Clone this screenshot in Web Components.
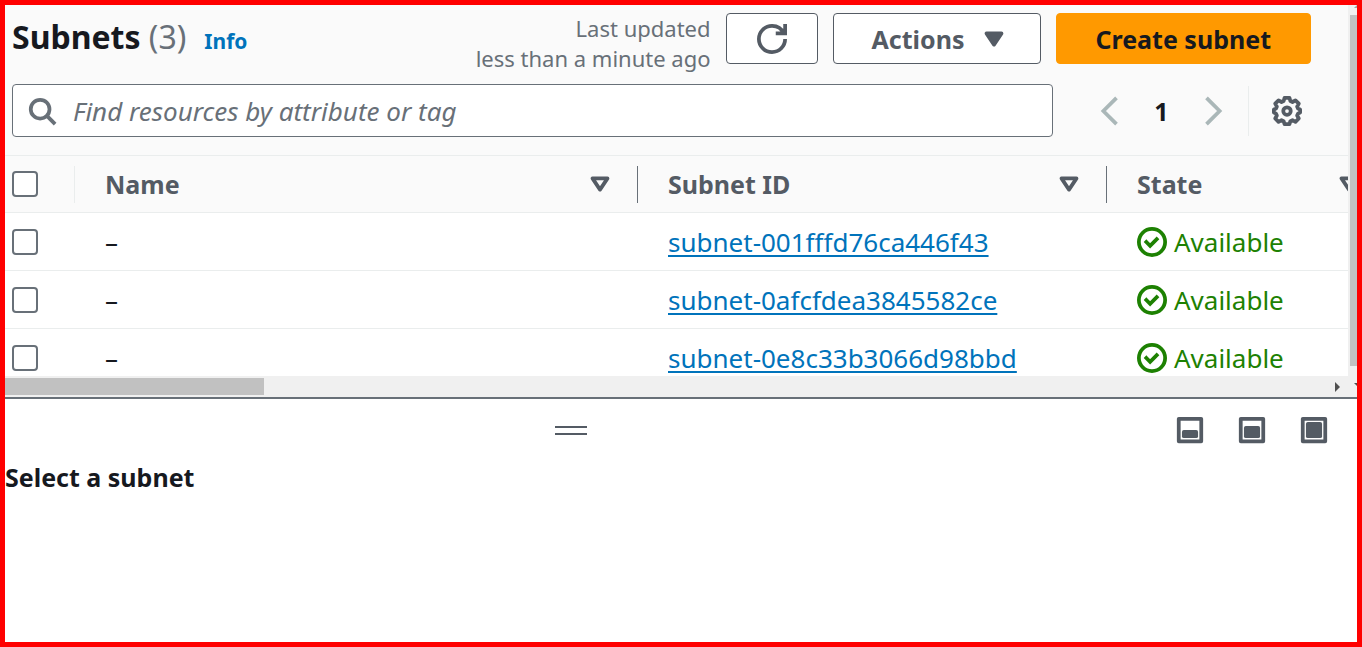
<!DOCTYPE html>
<html lang="en">
<head>
<meta charset="utf-8">
<meta name="viewport" content="width=device-width, initial-scale=1">
<title>Subnets</title>
<style>
  :root {
    --text: #16191f;
    --secondary: #545b64;
    --muted: #687078;
    --link: #0073bb;
    --line: #eaeded;
    --surface: #fafafa;
    --success: #1d8102;
  }

  * {
    box-sizing: border-box;
  }

  body {
    margin: 0;
    height: 100vh;
    border: 5px solid #f00;
    color: var(--text);
    background: #fff;
    font: 26px/30px "Noto Sans", "Open Sans", sans-serif;
  }
</style>
</head>
<body>
<subnets-page>
  <list-toolbar slot="list"></list-toolbar>
  <subnet-table slot="list"></subnet-table>
  <split-panel slot="panel">Select a subnet</split-panel>
</subnets-page>

<script>
/**
 *  An icon on a 16 unit grid
 *  @attribute name: one of the keys of AppIcon.shapes
 */
class AppIcon extends HTMLElement {
  static observedAttributes = ['name'];

  static shapes = {
    search: '<circle cx="7" cy="7" r="5"/><path d="m15 15-4.5-4.5"/>',
    refresh: '<path d="M10 5h5V0M15 8a7 7 0 0 1-7 7 7 7 0 0 1-7-7 7 7 0 0 1 7-7 6.9 6.9 0 0 1 6.3 4"/>',
    caret: '<path d="M4 5h8l-4 6-4-6z" fill="currentColor" stroke-linejoin="round"/>',
    sort: '<path d="M4 5h8l-4 6-4-6z" stroke-linejoin="round"/>',
    prev: '<path d="m12 1-7 7 7 7"/>',
    next: '<path d="m4 1 7 7-7 7"/>',
    check: '<circle cx="8" cy="8" r="7"/><path d="m5 8 2 2 3.5-3.5" stroke-linecap="square"/>',
    settings: '<circle cx="8" cy="8" r="2"/><path d="M6.7 1h2.6l.5 1.7 1.1.5 1.6-.9 1.8 1.8-.9 1.6.5 1 1.1.5v1.6l-1.1.5-.5 1.1.9 1.6-1.8 1.8-1.6-.9-1.1.5-.5 1.6H6.7l-.5-1.6-1.1-.5-1.6.9-1.8-1.8.9-1.6-.5-1.1L1 8.8V7.2l1.1-.5.5-1-.9-1.6 1.8-1.8 1.6.9 1.1-.5z" stroke-linejoin="round"/>',
    'panel-low': '<path d="M2 2h12v12H2z" stroke-linejoin="round"/><rect x="3.7" y="8" width="8.6" height="4.3" rx="1" fill="currentColor" stroke="none"/>',
    'panel-mid': '<path d="M2 2h12v12H2z" stroke-linejoin="round"/><rect x="3.7" y="5.8" width="8.6" height="6.5" rx="1" fill="currentColor" stroke="none"/>',
    'panel-full': '<path d="M2 2h12v12H2z" stroke-linejoin="round"/><rect x="3.7" y="3.7" width="8.6" height="8.6" rx="1" fill="currentColor" stroke="none"/>'
  };

  constructor() {
    super();
    this.attachShadow({mode: 'open'});
  }

  connectedCallback() { this.render(); }

  attributeChangedCallback() { this.render(); }

  render() {
    this.shadowRoot.innerHTML = `
    <style>
      :host { display: block; flex: none; width: 30px; height: 30px; }
      svg { display: block; width: 100%; height: 100%; }
    </style>
    <svg viewBox="0 0 16 16" fill="none" stroke="currentColor" stroke-width="2" aria-hidden="true">
      ${AppIcon.shapes[this.getAttribute('name')] || ''}
    </svg>`;
  }
}

/**
 *  A push button
 *  @attribute variant [optional]: "primary" for the filled one, "menu" for one with a caret
 *  @attribute label [optional]: accessible name for icon buttons
 */
class AppButton extends HTMLElement {
  constructor() {
    super();
    this.attachShadow({mode: 'open'});
  }

  connectedCallback() {
    const label = this.getAttribute('label');
    this.shadowRoot.innerHTML = `
    <style>
      :host { display: block; flex: none; }
      button {
        box-sizing: border-box;
        display: flex;
        align-items: center;
        justify-content: center;
        gap: 15px;
        height: 51px;
        padding: 0 30px;
        border: 1px solid var(--secondary);
        border-radius: 4px;
        color: var(--secondary);
        background: #fff;
        font: 700 25px/30px "Noto Sans", "Open Sans", sans-serif;
        white-space: nowrap;
        cursor: pointer;
      }
      :host([variant=menu]) button { padding: 0 31px 0 38px; }
      :host([variant=primary]) button {
        padding: 0 39px 0 38px;
        border-color: #f90;
        color: var(--text);
        background: #f90;
      }
    </style>
    <button type="button" ${label ? `aria-label="${label}"` : ''}><slot></slot></button>`;
  }
}

/** Title, actions, search box and paging above the table */
class ListToolbar extends HTMLElement {
  constructor() {
    super();
    this.attachShadow({mode: 'open'});
    this.shadowRoot.innerHTML = `
    <style>
      :host {
        display: flex;
        flex-direction: column;
        gap: 11px;
        padding: 8px 37px 18px 7px;
        background: var(--surface);
      }
      .row { display: flex; }
      .title { display: flex; align-items: baseline; flex: 1; }
      h1 { margin: 0; font-size: 32px; line-height: 48px; }
      h1 span { color: var(--muted); font-weight: 400; }
      .title a {
        margin-left: 18px;
        color: var(--link);
        font-size: 21px;
        font-weight: 700;
        text-decoration: none;
      }
      .updated {
        margin: 0 15px;
        color: var(--muted);
        font-size: 22px;
        line-height: 30px;
        text-align: right;
      }
      .actions { display: flex; align-items: flex-start; gap: 15px; }
      .search {
        box-sizing: border-box;
        display: flex;
        align-items: center;
        flex: 1;
        gap: 16px;
        height: 53px;
        padding: 0 14px;
        border: 1px solid var(--muted);
        border-radius: 4px;
        color: var(--muted);
        background: #fff;
      }
      input {
        flex: 1;
        min-width: 0;
        height: 40px;
        padding: 0;
        border: 0;
        outline: 0;
        color: var(--text);
        background: none;
        font: inherit;
        line-height: 40px;
      }
      input::placeholder { color: var(--muted); font-style: italic; opacity: 1; }
      nav { display: flex; align-items: center; padding: 0 9px 0 41px; }
      nav button {
        padding: 0;
        border: 0;
        color: var(--secondary);
        background: none;
        font: inherit;
        cursor: pointer;
      }
      nav button:disabled { color: #aab7b8; }
      nav .page { width: 75px; color: var(--text); font-size: 25px; font-weight: 700; }
      .settings {
        display: flex;
        align-items: center;
        height: 50px;
        margin-left: 19px;
        padding-left: 23px;
        border-left: 1px solid var(--line);
      }
    </style>
    <div class="row">
      <div class="title">
        <h1>Subnets <span>(3)</span></h1>
        <a href="#info">Info</a>
      </div>
      <p class="updated">Last updated<br>less than a minute ago</p>
      <div class="actions">
        <app-button label="Refresh"><app-icon name="refresh"></app-icon></app-button>
        <app-button variant="menu">Actions<app-icon name="caret"></app-icon></app-button>
        <app-button variant="primary">Create subnet</app-button>
      </div>
    </div>
    <div class="row">
      <label class="search">
        <app-icon name="search"></app-icon>
        <input type="text" aria-label="Find resources" placeholder="Find resources by attribute or tag">
      </label>
      <nav aria-label="Pages">
        <button type="button" aria-label="Previous page" disabled><app-icon name="prev"></app-icon></button>
        <button type="button" class="page">1</button>
        <button type="button" aria-label="Next page" disabled><app-icon name="next"></app-icon></button>
        <div class="settings">
          <button type="button" aria-label="Preferences"><app-icon name="settings"></app-icon></button>
        </div>
      </nav>
    </div>`;
  }
}

/** The table of subnets */
class SubnetTable extends HTMLElement {
  #rows = [
    {name: '–', id: 'subnet-001fffd76ca446f43', state: 'Available'},
    {name: '–', id: 'subnet-0afcfdea3845582ce', state: 'Available'},
    {name: '–', id: 'subnet-0e8c33b3066d98bbd', state: 'Available'}
  ];

  constructor() {
    super();
    this.attachShadow({mode: 'open'});
    this.shadowRoot.innerHTML = `
    <style>
      :host { display: block; overflow: hidden; }
      table { width: 1382px; border-collapse: separate; border-spacing: 0; table-layout: fixed; }
      .select { width: 70px; }
      .name { width: 563px; }
      .id { width: 469px; }
      th, td {
        box-sizing: border-box;
        height: 58px;
        padding: 0;
        border-bottom: 1px solid var(--line);
        text-align: left;
        white-space: nowrap;
      }
      th {
        border-top: 1px solid var(--line);
        color: var(--secondary);
        background: var(--surface);
        font-size: 25px;
      }
      th div {
        box-sizing: border-box;
        display: flex;
        align-items: center;
        justify-content: space-between;
        height: 37px;
        padding: 0 22px 0 30px;
        border-right: 1px solid var(--muted);
      }
      th:first-child div { padding: 0 0 0 7px; border-color: var(--line); }
      td { padding-left: 30px; }
      td:first-child { padding-left: 7px; }
      input {
        appearance: none;
        box-sizing: border-box;
        display: block;
        width: 26px;
        height: 26px;
        margin: 0;
        border: 2px solid var(--muted);
        border-radius: 4px;
        background: #fff;
      }
      input:checked { background: var(--link); }
      a { color: var(--link); text-decoration-thickness: 2px; text-underline-offset: 3px; }
      .state { display: flex; align-items: center; gap: 7px; color: var(--success); }
    </style>
    <table>
      <colgroup><col class="select"><col class="name"><col class="id"><col></colgroup>
      <thead>
        <tr>
          <th><div><input type="checkbox" aria-label="Select all"></div></th>
          <th><div>Name<app-icon name="sort"></app-icon></div></th>
          <th><div>Subnet ID<app-icon name="sort"></app-icon></div></th>
          <th><div>State<app-icon name="sort"></app-icon></div></th>
        </tr>
      </thead>
      <tbody>
        ${this.#rows.map(row => `
        <tr>
          <td><input type="checkbox" aria-label="Select ${row.id}"></td>
          <td>${row.name}</td>
          <td><a href="#${row.id}">${row.id}</a></td>
          <td><span class="state"><app-icon name="check"></app-icon>${row.state}</span></td>
        </tr>`).join('')}
      </tbody>
    </table>`;
  }
}

/** The panel under the list, with its drag handle and size buttons */
class SplitPanel extends HTMLElement {
  constructor() {
    super();
    this.attachShadow({mode: 'open'});
    this.shadowRoot.innerHTML = `
    <style>
      :host { display: block; border-top: 2px solid var(--muted); background: #fff; }
      header {
        display: grid;
        grid-template-columns: 1fr auto 1fr;
        align-items: center;
        height: 62px;
        padding-right: 28px;
      }
      .handle {
        box-sizing: border-box;
        grid-column: 2;
        width: 32px;
        height: 9px;
        margin-right: 192px;
        padding: 0;
        border: solid var(--secondary);
        border-width: 2px 0;
        background: none;
        cursor: row-resize;
      }
      .sizes { display: flex; justify-content: flex-end; gap: 32px; }
      .sizes button { padding: 0; border: 0; color: var(--secondary); background: none; }
      h2 { margin: 0; font-size: 25px; line-height: 32px; }
    </style>
    <header>
      <button type="button" class="handle" aria-label="Resize panel"></button>
      <div class="sizes">
        <button type="button" aria-label="Small"><app-icon name="panel-low"></app-icon></button>
        <button type="button" aria-label="Medium"><app-icon name="panel-mid"></app-icon></button>
        <button type="button" aria-label="Full"><app-icon name="panel-full"></app-icon></button>
      </div>
    </header>
    <h2><slot></slot></h2>`;
  }
}

/** Splits the page in a list with its scroll bars and a panel below */
class SubnetsPage extends HTMLElement {
  constructor() {
    super();
    this.attachShadow({mode: 'open'});
    this.shadowRoot.innerHTML = `
    <style>
      :host {
        display: grid;
        grid-template: minmax(0, 1fr) 21px 245px / minmax(0, 1fr) 9px;
        height: 100%;
        overflow: hidden;
      }
      .list { overflow: hidden; }
      .bar { display: flex; overflow: hidden; background: #f0f0f0; }
      .thumb { background: #c1c1c1; }
      .bar svg { display: block; flex: none; fill: #505050; }
      .down { flex-direction: column; padding-left: 2px; }
      .down svg { fill: #a3a3a3; }
      .down .thumb { flex: 1; margin-bottom: 10px; }
      .across { grid-column: 1 / -1; align-items: center; justify-content: space-between; }
      .across .thumb { width: 259px; height: 17px; }
      .arrows { display: flex; align-items: center; gap: 13px; }
      .panel { grid-column: 1 / -1; }
    </style>
    <div class="list"><slot name="list"></slot></div>
    <div class="bar down">
      <svg width="7" height="10" viewBox="0 0 7 10"><path d="M4 3l3-3v3z"/></svg>
      <div class="thumb"></div>
    </div>
    <div class="bar across">
      <div class="thumb"></div>
      <div class="arrows">
        <svg width="6" height="10" viewBox="0 0 6 10"><path d="M0 0l5 5-5 5z"/></svg>
        <svg width="3" height="10" viewBox="0 0 3 10"><path d="M0 1h3v3z"/></svg>
      </div>
    </div>
    <div class="panel"><slot name="panel"></slot></div>`;
  }
}

customElements.define('app-icon', AppIcon);
customElements.define('app-button', AppButton);
customElements.define('list-toolbar', ListToolbar);
customElements.define('subnet-table', SubnetTable);
customElements.define('split-panel', SplitPanel);
customElements.define('subnets-page', SubnetsPage);
</script>
</body>
</html>
